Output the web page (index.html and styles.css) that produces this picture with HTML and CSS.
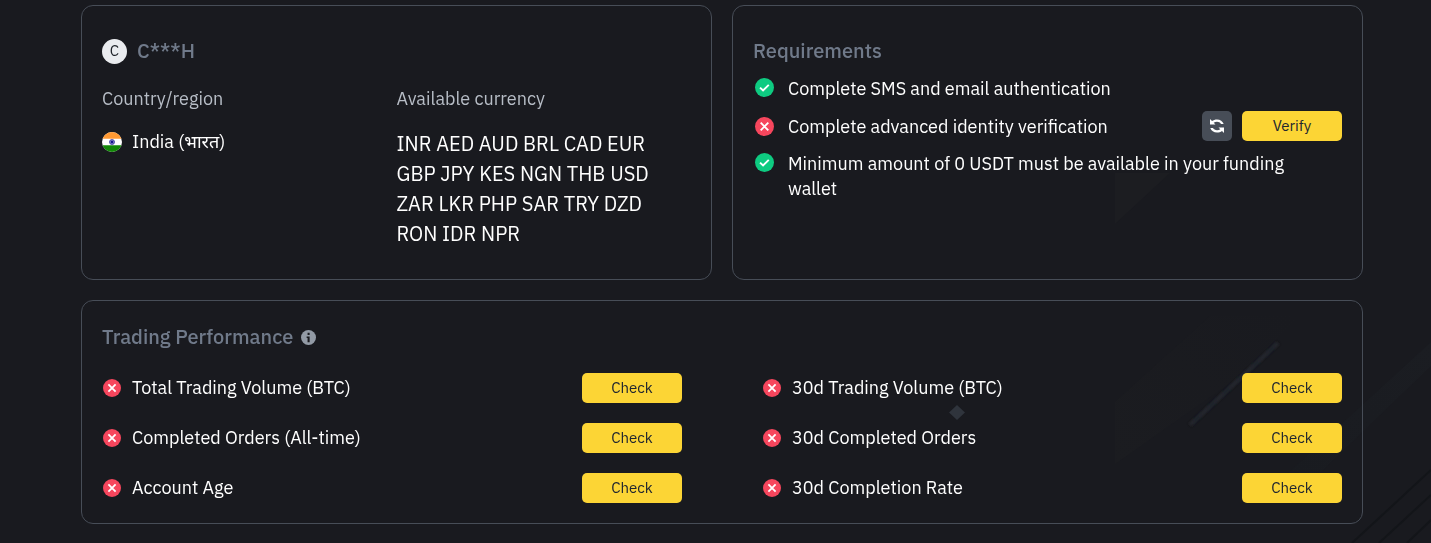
FILE: index.html
```html
<!DOCTYPE html>
<html lang="en">
<head>
<meta charset="utf-8">
<meta name="viewport" content="width=device-width, initial-scale=1">
<title>Merchant requirements</title>
<link rel="stylesheet" href="styles.css">
</head>
<body>
<svg class="backdrop" viewBox="0 0 1431 543" preserveAspectRatio="xMaxYMin slice" aria-hidden="true">
  <defs>
    <filter id="soft" x="-10%" y="-10%" width="120%" height="120%"><feGaussianBlur stdDeviation="1"/></filter>
    <linearGradient id="fade" x1="0" y1="1" x2="1" y2="0"><stop offset="0" stop-color="#1b1c20"/><stop offset="1" stop-color="#191a1f"/></linearGradient>
    <linearGradient id="beam" x1="0" y1="1" x2="1" y2="0"><stop offset="0" stop-color="#191b20"/><stop offset="1" stop-color="#1b1d22"/></linearGradient>
  </defs>
  <path d="M1115 173h55l-55 51z" fill="#1c1d21"/>
  <path d="M1115 402l95-86h90l-60 60-125 88z" fill="url(#fade)"/>
  <path d="M1431 342v24L1320 473h-32z" fill="url(#beam)"/>
  <path d="M1190 425l88-82" stroke="#22262d" stroke-width="4" filter="url(#soft)"/>
  <path d="M957 405l8 7.500-8 7.500-8-7.500z" fill="#2f343c"/>
  <path d="M1352 543l79-73M1379 543l52-48M1407 543l24-23" stroke="#131519" stroke-width="2"/>
</svg>
<svg class="sprite" aria-hidden="true">
  <symbol id="ok" viewBox="0 0 20 20"><circle cx="10" cy="10" r="10" fill="#0ecb81"/><path d="M5.300 10.100l3.200 3.100 6-6" fill="none" stroke="#fff" stroke-width="2"/></symbol>
  <symbol id="no" viewBox="0 0 20 20"><circle cx="10" cy="10" r="10" fill="#f6465d"/><path d="M6 6l8 8M14 6l-8 8" stroke="#fff" stroke-width="2"/></symbol>
</svg>
<main class="page">
  <section class="card profile">
    <h2 class="title user"><span class="avatar">C</span>C***H</h2>
    <dl class="facts">
      <div class="fact">
        <dt>Country/region</dt>
        <dd class="country">
          <svg class="flag" viewBox="0 0 20 20" aria-hidden="true">
            <clipPath id="round"><circle cx="10" cy="10" r="10"/></clipPath>
            <g clip-path="url(#round)"><path fill="#fff" d="M0 0h20v20H0z"/><path fill="#f93" d="M0 0h20v6.700H0z"/><path fill="#128807" d="M0 13.300h20V20H0z"/></g>
            <circle cx="10" cy="10" r="2.500" fill="#7c7cc4" stroke="#3a3aa0" stroke-width=".8"/><circle cx="10" cy="10" r="1.200" fill="#14148c"/>
          </svg>
          India (भारत)
        </dd>
      </div>
      <div class="fact">
        <dt>Available currency</dt>
        <dd class="currencies">INR AED AUD BRL CAD EUR GBP JPY KES NGN THB USD ZAR LKR PHP SAR TRY DZD RON IDR NPR</dd>
      </div>
    </dl>
  </section>

  <section class="card">
    <h2 class="title spaced">Requirements</h2>
    <ul class="requirements">
      <li><svg class="mark" role="img" aria-label="Done"><use href="#ok"/></svg><span>Complete SMS and email authentication</span></li>
      <li class="pending"><svg class="mark" role="img" aria-label="Not done"><use href="#no"/></svg><span>Complete advanced identity verification</span>
        <span class="actions">
          <button class="refresh" type="button" aria-label="Refresh">
            <svg viewBox="0 0 16 16" aria-hidden="true"><path d="M1 1v5.500h5.500L4.700 4.700C5.600 4.100 6.700 3.800 8 3.800c1.800 0 3.200.8 4 2.200h2.700C13.700 3.200 11.200 1.400 8 1.400c-1.900 0-3.600.5-5 1.600zM15 15V9.500H9.500l1.800 1.800c-.9.600-2 .9-3.300.9-1.800 0-3.200-.8-4-2.200H1.300c1 2.800 3.500 4.600 6.700 4.600 1.900 0 3.600-.5 5-1.600z" fill="#fff"/></svg>
          </button>
          <button class="primary" type="button">Verify</button>
        </span>
      </li>
      <li><svg class="mark" role="img" aria-label="Done"><use href="#ok"/></svg><span>Minimum amount of 0 USDT must be available in your funding wallet</span></li>
    </ul>
  </section>

  <section class="card performance">
    <h2 class="title">Trading Performance
      <svg class="info" viewBox="0 0 16 16" role="img" aria-label="Information"><circle cx="8" cy="8" r="8" fill="#929aa5"/><path d="M7 3h2.200v2.200H7zM6 6.800h3.200V13H7V8.600H6z" fill="#191a1f"/></svg>
    </h2>
    <ul class="checks">
      <li><svg class="dot" role="img" aria-label="Not met"><use href="#no"/></svg>Total Trading Volume (BTC)<button class="primary" type="button">Check</button></li>
      <li><svg class="dot" role="img" aria-label="Not met"><use href="#no"/></svg>30d Trading Volume (BTC)<button class="primary" type="button">Check</button></li>
      <li><svg class="dot" role="img" aria-label="Not met"><use href="#no"/></svg>Completed Orders (All-time)<button class="primary" type="button">Check</button></li>
      <li><svg class="dot" role="img" aria-label="Not met"><use href="#no"/></svg>30d Completed Orders<button class="primary" type="button">Check</button></li>
      <li><svg class="dot" role="img" aria-label="Not met"><use href="#no"/></svg>Account Age<button class="primary" type="button">Check</button></li>
      <li><svg class="dot" role="img" aria-label="Not met"><use href="#no"/></svg>30d Completion Rate<button class="primary" type="button">Check</button></li>
    </ul>
  </section>
</main>
</body>
</html>
```
FILE: styles.css
```css
* { box-sizing: border-box; }

body {
  margin: 0;
  min-height: 100vh;
  background: #191a1f;
  color: #fff;
  font: 18px/25px "IBM Plex Sans", Roboto, "Noto Sans", sans-serif;
}

ul, dl, dd, h2 { margin: 0; padding: 0; }
ul { list-style: none; }

.backdrop { position: fixed; inset: 0; z-index: -1; width: 100%; height: 100%; }
.sprite { position: absolute; width: 0; height: 0; }

.page {
  display: grid;
  grid-template-columns: 1fr 1fr;
  gap: 20px;
  padding: 5px 68px 19px 81px;
}

.card {
  padding: 30px 20px;
  border: 1px solid #474d57;
  border-radius: 12px;
}

.title {
  display: flex;
  align-items: center;
  gap: 8px;
  color: #707a8a;
  font-size: 20px;
  font-weight: 500;
  line-height: 30px;
}
.spaced { margin-bottom: 10px; }
.user { gap: 10px; }

.avatar {
  width: 25px;
  height: 25px;
  border-radius: 50%;
  background: #eaecef;
  color: #1e2329;
  font-size: 15px;
  font-weight: 400;
  line-height: 24px;
  text-align: center;
}

.facts { display: grid; grid-template-columns: 1fr 1fr; margin-top: 20px; }
.fact { display: flex; flex-direction: column; gap: 18px; }
.fact dt { color: #b7bdc6; }
.country { display: flex; align-items: center; gap: 10px; }
.flag { width: 20px; height: 20px; }
.currencies { max-width: 270px; font-size: 20px; line-height: 30px; }

.requirements { display: flex; flex-direction: column; gap: 10px; }
.requirements li { display: flex; align-items: flex-start; gap: 12px; }
.requirements .pending { align-items: center; }
.requirements li > span:first-of-type { max-width: 500px; }
.mark { flex: none; width: 23px; height: 23px; padding: 2px; }

.actions { display: flex; gap: 10px; margin-left: auto; }

button {
  height: 30px;
  padding: 0;
  border: 0;
  border-radius: 5px;
  font: inherit;
  font-size: 15px;
  line-height: 24px;
  cursor: pointer;
}
.primary { width: 100px; background: #fcd535; color: #202630; }
.refresh { display: grid; place-items: center; width: 30px; background: #474d57; }
.refresh svg { width: 16px; height: 16px; }

.performance { grid-column: 1 / -1; padding: 21px 20px 20px; }
.info { width: 15px; height: 15px; }
.checks {
  display: grid;
  grid-template-columns: 1fr 1fr;
  gap: 20px 80px;
  margin-top: 21px;
  line-height: 24px;
}
.checks li { display: flex; align-items: center; gap: 10px; }
.checks .primary { margin-left: auto; }
.dot { width: 20px; height: 20px; padding: 1px; }
```
